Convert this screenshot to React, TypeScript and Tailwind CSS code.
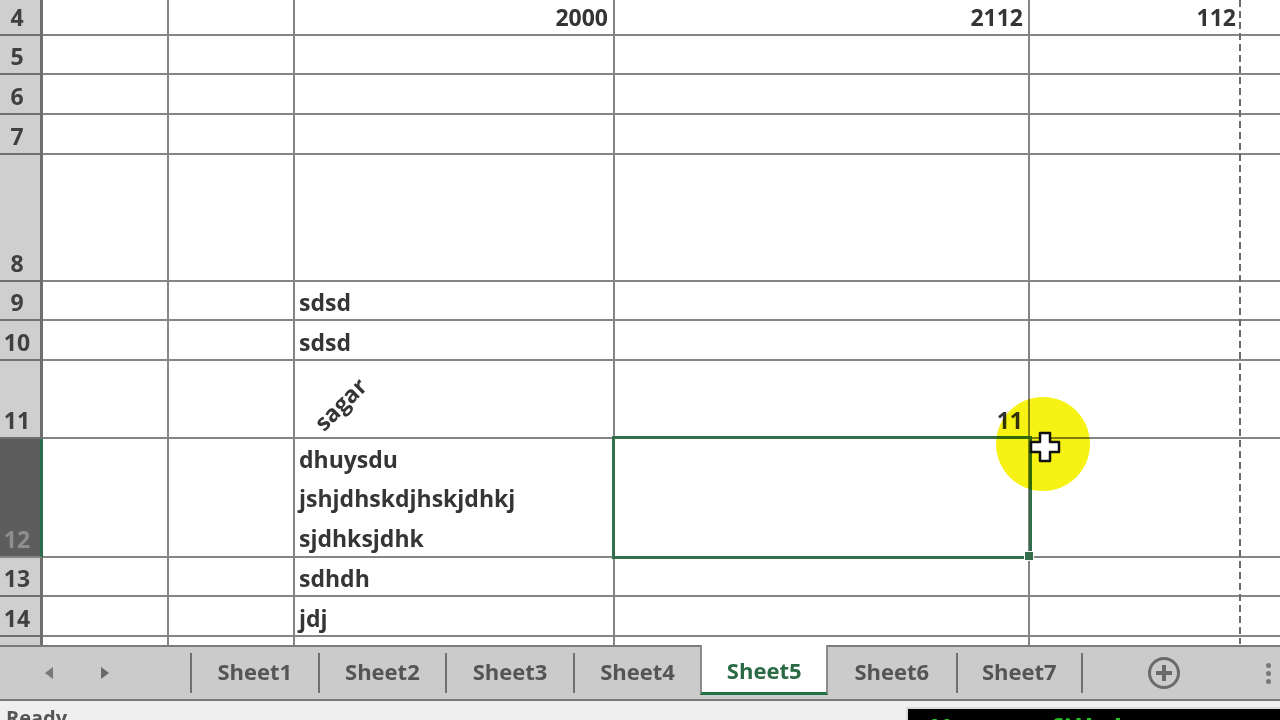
import React from 'react'

type Cell = {
  text?: string
  right?: boolean
  lines?: string[]
  rotated?: boolean
}

type Row = {
  label: string
  height: string
  selected?: boolean
  cells: Record<number, Cell>
}

// column widths B..F, G takes what is left
const colWidths = ['w-[126px]', 'w-[126px]', 'w-[320px]', 'w-[415px]', 'w-[211px]']

const rows: Row[] = [
  { label: '4', height: 'h-[36px]', cells: { 2: { text: '2000', right: true }, 3: { text: '2112', right: true }, 4: { text: '112', right: true } } },
  { label: '5', height: 'h-[39px]', cells: {} },
  { label: '6', height: 'h-[40px]', cells: {} },
  { label: '7', height: 'h-[40px]', cells: {} },
  { label: '8', height: 'h-[127px]', cells: {} },
  { label: '9', height: 'h-[39px]', cells: { 2: { text: 'sdsd' } } },
  { label: '10', height: 'h-[40px]', cells: { 2: { text: 'sdsd' } } },
  { label: '11', height: 'h-[78px]', cells: { 2: { text: 'sagar', rotated: true }, 3: { text: '11', right: true } } },
  {
    label: '12',
    height: 'h-[119px]',
    selected: true,
    cells: { 2: { lines: ['dhuysdu', 'jshjdhskdjhskjdhkj', 'sjdhksjdhk'] } },
  },
  { label: '13', height: 'h-[39px]', cells: { 2: { text: 'sdhdh' } } },
  { label: '14', height: 'h-[40px]', cells: { 2: { text: 'jdj' } } },
]

const sheets = ['Sheet1', 'Sheet2', 'Sheet3', 'Sheet4', 'Sheet5', 'Sheet6', 'Sheet7']
const activeSheet = 'Sheet5'

function GridCell({ cell, width, last }: { cell?: Cell; width?: string; last?: boolean }) {
  const base = `flex h-full shrink-0 items-end border-b-2 border-[#858585] ${width ?? 'flex-1'} ${last ? '' : 'border-r-2'}`
  if (!cell) return <div className={base} />
  if (cell.lines) {
    return (
      <div className={base}>
        <div className="-mb-[2px] pl-[4px] leading-[39.5px]">
          {cell.lines.map((l) => (
            <div key={l}>{l}</div>
          ))}
        </div>
      </div>
    )
  }
  if (cell.rotated) {
    return (
      <div className={base}>
        <span className="-mb-[3px] ml-[37px] inline-block origin-bottom-left -rotate-45 leading-[39px]">{cell.text}</span>
      </div>
    )
  }
  return (
    <div className={`${base} pb-[2px] ${cell.right ? 'justify-end pr-[5px]' : 'pl-[4px]'}`}>
      <span className="leading-[30px]">{cell.text}</span>
    </div>
  )
}

function SheetRow({ row }: { row: Row }) {
  return (
    <div className={`flex ${row.height}`}>
      <div
        className={`flex w-[43px] shrink-0 items-end justify-center border-b-2 border-r-[3px] pb-[2px] pr-[6px] font-bold leading-[30px] ${
          row.selected
            ? 'border-b-[#858585] border-r-[#2b6e4c] bg-[#5d5d5d] text-[#8e8e8e]'
            : 'border-[#6f6f6f] bg-[#cfcfcf] text-[#404040]'
        }`}
      >
        {row.label}
      </div>
      {colWidths.map((w, i) => (
        <GridCell key={i} cell={row.cells[i]} width={w} last={i === 4} />
      ))}
      <GridCell cell={row.cells[5]} last />
    </div>
  )
}

function Tab({ name, first, last }: { name: string; first?: boolean; last?: boolean }) {
  if (name === activeSheet) {
    return (
      <div className="-mt-[2px] flex h-[50px] w-[127.6px] shrink-0 items-center justify-center self-start border-x-2 border-b-[3px] border-x-[#8a8a8a] border-b-[#217346] bg-white pt-[3px] font-bold text-[#2a6b46]">
        {name}
      </div>
    )
  }
  const afterActive = sheets[sheets.indexOf(name) - 1] === activeSheet
  return (
    <div
      className={`flex h-[40px] w-[127.6px] shrink-0 items-center justify-center border-[#707070] pb-[4px] font-bold text-[#555] ${
        afterActive && !first ? '' : 'border-l-2'
      } ${last ? 'border-r-2' : ''}`}
    >
      {name}
    </div>
  )
}

export default function App() {
  return (
    <div className="relative h-[720px] w-[1280px] overflow-hidden bg-white font-['Open_Sans',sans-serif] text-[23px] font-bold text-[#353535]">
      {/* sheet grid */}
      <div className="flex flex-col">
        {rows.map((r) => (
          <SheetRow key={r.label} row={r} />
        ))}
        {/* peek of row 15 */}
        <div className="flex h-[8px]">
          <div className="w-[43px] shrink-0 border-r-[3px] border-[#6f6f6f] bg-[#cfcfcf]" />
          {colWidths.map((w, i) => (
            <div key={i} className={`${w} shrink-0 ${i === 4 ? '' : 'border-r-2 border-[#858585]'}`} />
          ))}
          <div className="flex-1" />
        </div>
      </div>

      {/* sheet tabs */}
      <div className="flex h-[56px] items-center border-y-2 border-[#7a7a7a] bg-[#cbcbcb] text-[22px]">
        <div className="flex w-[190px] shrink-0 items-center pl-[44px]">
          <svg width="10" height="14" viewBox="0 0 10 14">
            <path d="M9 1 L1 7 L9 13 Z" fill="#777" />
          </svg>
          <svg width="10" height="14" viewBox="0 0 10 14" className="ml-[46px]">
            <path d="M1 1 L9 7 L1 13 Z" fill="#6a6a6a" />
          </svg>
        </div>
        {sheets.map((s, i) => (
          <Tab key={s} name={s} first={i === 0} last={i === sheets.length - 1} />
        ))}
        <div className="flex flex-1 items-center">
          <svg width="36" height="36" viewBox="0 0 36 36" className="ml-[63px]">
            <circle cx="18" cy="18" r="14.5" fill="none" stroke="#6a6a6a" strokeWidth="3" />
            <path d="M18 10 V26 M10 18 H26" stroke="#6a6a6a" strokeWidth="4" />
          </svg>
          <div className="ml-[84px] flex flex-col gap-[3px]">
            <span className="h-[5px] w-[5px] rounded-full bg-[#777]" />
            <span className="h-[5px] w-[5px] rounded-full bg-[#777]" />
            <span className="h-[5px] w-[5px] rounded-full bg-[#777]" />
          </div>
        </div>
      </div>

      {/* status bar */}
      <div className="flex h-[20px] bg-[#efefef]">
        <div className="pl-[6px] pt-[7px] text-[20px] font-bold leading-none text-[#555]">Ready</div>
        <div className="ml-auto mt-[6px] flex h-[20px] w-[374px] border-l-2 border-t-2 border-[#d8d8d8] bg-black pl-[22px] pt-[6px] text-[28px] font-bold leading-none tracking-[2px] text-[#22c022]">
          How to fill data
        </div>
      </div>

      {/* page break */}
      <div className="absolute left-[1239px] top-0 h-[644px] w-[2px] bg-[repeating-linear-gradient(to_bottom,#6b6b6b_0_7px,transparent_7px_11px)]" />

      {/* active selection */}
      <div className="absolute left-[612px] top-[436px] h-[123px] w-[420px] border-[3px] border-[#336d4c]" />
      <div className="absolute left-[1024px] top-[551px] h-[10px] w-[10px] border border-white bg-[#336d4c]" />

      {/* pointer highlight */}
      <div className="absolute left-[996px] top-[397px] h-[94px] w-[94px] rounded-full bg-[#f6f214] mix-blend-multiply" />
      <svg width="32" height="32" viewBox="0 0 32 32" className="absolute left-[1029px] top-[431px]">
        <path
          d="M11 2 H21 V11 H30 V21 H21 V30 H11 V21 H2 V11 H11 Z"
          fill="#fff"
          stroke="#111"
          strokeWidth="2.5"
          strokeLinejoin="round"
        />
      </svg>
    </div>
  )
}
